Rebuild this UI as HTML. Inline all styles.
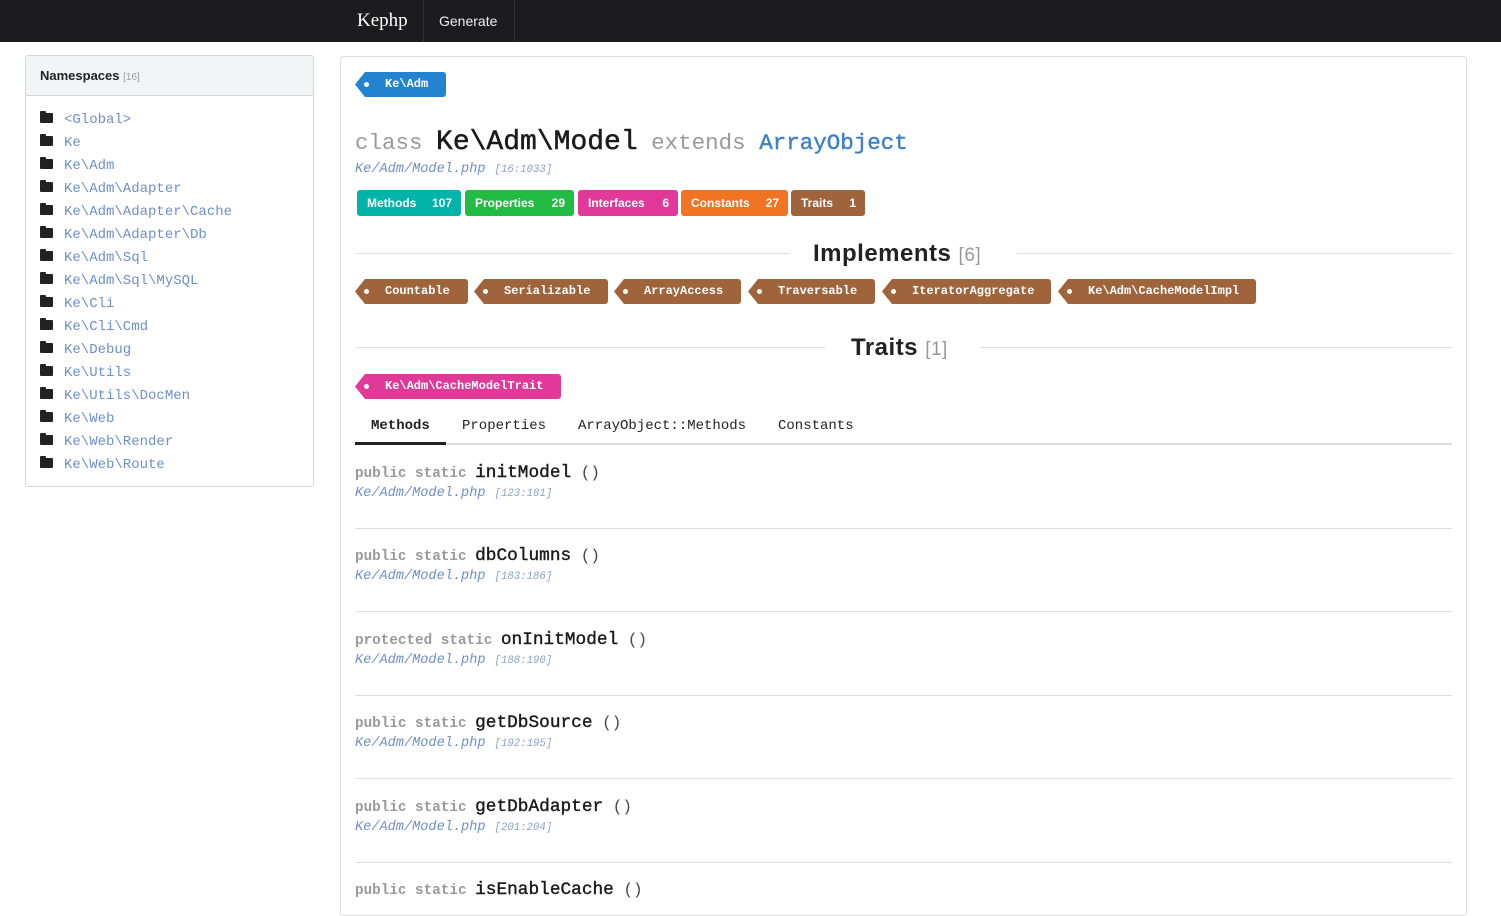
<!DOCTYPE html>
<html><head><meta charset="utf-8"><style>
*{box-sizing:border-box;margin:0;padding:0}
body{width:1501px;height:896px;overflow:hidden;background:#fff;font-family:"Liberation Sans",sans-serif;position:relative}
.nav{position:absolute;left:0;top:0;width:1501px;height:42px;background:#1c1c1e}
.brand{position:absolute;left:357px;top:10px;color:#fff;font-family:"Liberation Serif",serif;font-size:19px}
.navsep{position:absolute;top:0;width:1px;height:42px;background:#333}
.gen{position:absolute;left:439px;top:13px;color:#eee;font-size:14px}
.side{position:absolute;left:25px;top:55px;width:289px;height:432px;border:1px solid #d6d6d6;border-radius:3px}
.side .hd{height:40px;background:#f3f4f5;border-bottom:1px solid #d6d6d6;padding:12px 14px;font-weight:bold;font-size:13px;color:#222}
.side .hd span{color:#999;font-weight:normal;font-size:10px}
.side ul{list-style:none;padding:15px 0 0 14px}
.side li{height:23px;font-family:"Liberation Mono",monospace;font-size:14px;color:#6d8fc9;line-height:18px}
.side li i{display:inline-block;width:13px;height:10px;background:#222;border-radius:1px;margin-right:11px;position:relative;top:0px}
.side li i:before{content:"";position:absolute;left:0;top:-2px;width:6px;height:3px;background:#222;border-radius:1px 1px 0 0}
.main{position:absolute;left:340px;top:56px;width:1127px;height:860px;border:1px solid #ddd;border-radius:3px}
.a{position:absolute}
.tag{position:absolute;height:25px;color:#fff;font-family:"Liberation Mono",monospace;font-weight:bold;font-size:12px;line-height:25px;padding-left:30px;clip-path:polygon(0 50%,10px 0,100% 0,100% 100%,10px 100%);border-radius:0 3px 3px 0}
.tag:before{content:"";position:absolute;left:9px;top:10px;width:5px;height:5px;border-radius:50%;background:#fff}
.br{background:#a0643d}
.mono{font-family:"Liberation Mono",monospace}
.badge{position:absolute;top:190px;height:26px;border-radius:3px;color:#fff;font-size:12px;font-weight:bold;line-height:26px;padding-left:10px}
.badge b{position:absolute;right:9px}
.h2{position:absolute;font-size:24px;font-weight:bold;color:#222;letter-spacing:.5px}
.h2 span{color:#999;font-weight:normal;font-size:19px}
.hr{position:absolute;height:1px;background:#ddd}
.tab{position:absolute;top:418px;font-family:"Liberation Mono",monospace;font-size:14px;color:#222}
.m{position:absolute;left:355px;font-family:"Liberation Mono",monospace}
.m .k{font-size:14.3px;color:#999;font-weight:bold}
.m .n{font-size:17.8px;color:#1a1a1a;-webkit-text-stroke:0.4px #1a1a1a}
.m .p{font-size:16px;color:#444}
.m .f{display:block;margin-top:3px;font-size:13.6px;color:#6d8fc9;font-style:italic}
.m .f span{font-size:10.7px;color:#8aa3c9;margin-left:9px}
</style></head><body>
<div class="nav"><div class="brand">Kephp</div><div class="navsep" style="left:423px"></div><div class="gen">Generate</div><div class="navsep" style="left:514px"></div></div>
<div class="side"><div class="hd">Namespaces <span>[16]</span></div><ul>
<li><i></i>&lt;Global&gt;</li><li><i></i>Ke</li><li><i></i>Ke\Adm</li><li><i></i>Ke\Adm\Adapter</li><li><i></i>Ke\Adm\Adapter\Cache</li><li><i></i>Ke\Adm\Adapter\Db</li><li><i></i>Ke\Adm\Sql</li><li><i></i>Ke\Adm\Sql\MySQL</li><li><i></i>Ke\Cli</li><li><i></i>Ke\Cli\Cmd</li><li><i></i>Ke\Debug</li><li><i></i>Ke\Utils</li><li><i></i>Ke\Utils\DocMen</li><li><i></i>Ke\Web</li><li><i></i>Ke\Web\Render</li><li><i></i>Ke\Web\Route</li>
</ul></div>
<div class="main"></div>
<div class="tag" style="left:355px;top:72px;width:91px;background:#2283d0">Ke\Adm</div>
<div class="a mono" style="left:355px;top:127px;white-space:nowrap"><span style="font-size:22.5px;color:#999">class </span><span style="font-size:28px;color:#1a1a1a;-webkit-text-stroke:0.5px #1a1a1a">Ke\Adm\Model</span><span style="font-size:22.5px;color:#999"> extends </span><span style="font-size:22.5px;color:#3d7fce;-webkit-text-stroke:0.4px #3d7fce">ArrayObject</span></div>
<div class="m" style="top:162px"><span class="f" style="margin:0">Ke/Adm/Model.php<span>[16:1033]</span></span></div>
<div class="badge" style="left:357px;width:104px;background:#00b4a9">Methods<b>107</b></div>
<div class="badge" style="left:465px;width:109px;background:#22bb44">Properties<b>29</b></div>
<div class="badge" style="left:578px;width:100px;background:#e0399a">Interfaces<b>6</b></div>
<div class="badge" style="left:681px;width:107px;background:#f07422">Constants<b>27</b></div>
<div class="badge" style="left:791px;width:74px;background:#a0643d">Traits<b>1</b></div>
<div class="hr" style="left:355px;top:253px;width:435px"></div><div class="hr" style="left:1017px;top:253px;width:435px"></div>
<div class="h2" style="left:813px;top:240px">Implements <span>[6]</span></div>
<div class="tag br" style="left:355px;top:279px;width:113px">Countable</div>
<div class="tag br" style="left:474px;top:279px;width:134px">Serializable</div>
<div class="tag br" style="left:614px;top:279px;width:127px">ArrayAccess</div>
<div class="tag br" style="left:748px;top:279px;width:127px">Traversable</div>
<div class="tag br" style="left:882px;top:279px;width:169px">IteratorAggregate</div>
<div class="tag br" style="left:1058px;top:279px;width:198px">Ke\Adm\CacheModelImpl</div>
<div class="hr" style="left:355px;top:347px;width:471px"></div><div class="hr" style="left:981px;top:347px;width:471px"></div>
<div class="h2" style="left:851px;top:334px">Traits <span>[1]</span></div>
<div class="tag" style="left:355px;top:374px;width:206px;background:#e0399a">Ke\Adm\CacheModelTrait</div>
<div class="tab" style="left:371px;font-weight:bold">Methods</div>
<div class="tab" style="left:462px">Properties</div>
<div class="tab" style="left:578px">ArrayObject::Methods</div>
<div class="tab" style="left:778px">Constants</div>
<div class="hr" style="left:355px;top:443px;width:1097px;height:2px;background:#ddd"></div>
<div class="a" style="left:355px;top:442px;width:91px;height:3px;background:#222"></div>
<div class="m" style="top:463px"><span class="k">public static </span><span class="n">initModel</span> <span class="p">()</span><span class="f">Ke/Adm/Model.php<span>[123:181]</span></span></div>
<div class="hr" style="left:355px;top:528px;width:1097px"></div>
<div class="m" style="top:546px"><span class="k">public static </span><span class="n">dbColumns</span> <span class="p">()</span><span class="f">Ke/Adm/Model.php<span>[183:186]</span></span></div>
<div class="hr" style="left:355px;top:611px;width:1097px"></div>
<div class="m" style="top:630px"><span class="k">protected static </span><span class="n">onInitModel</span> <span class="p">()</span><span class="f">Ke/Adm/Model.php<span>[188:190]</span></span></div>
<div class="hr" style="left:355px;top:695px;width:1097px"></div>
<div class="m" style="top:713px"><span class="k">public static </span><span class="n">getDbSource</span> <span class="p">()</span><span class="f">Ke/Adm/Model.php<span>[192:195]</span></span></div>
<div class="hr" style="left:355px;top:778px;width:1097px"></div>
<div class="m" style="top:797px"><span class="k">public static </span><span class="n">getDbAdapter</span> <span class="p">()</span><span class="f">Ke/Adm/Model.php<span>[201:204]</span></span></div>
<div class="hr" style="left:355px;top:862px;width:1097px"></div>
<div class="m" style="top:880px"><span class="k">public static </span><span class="n">isEnableCache</span> <span class="p">()</span></div>
</body></html>
